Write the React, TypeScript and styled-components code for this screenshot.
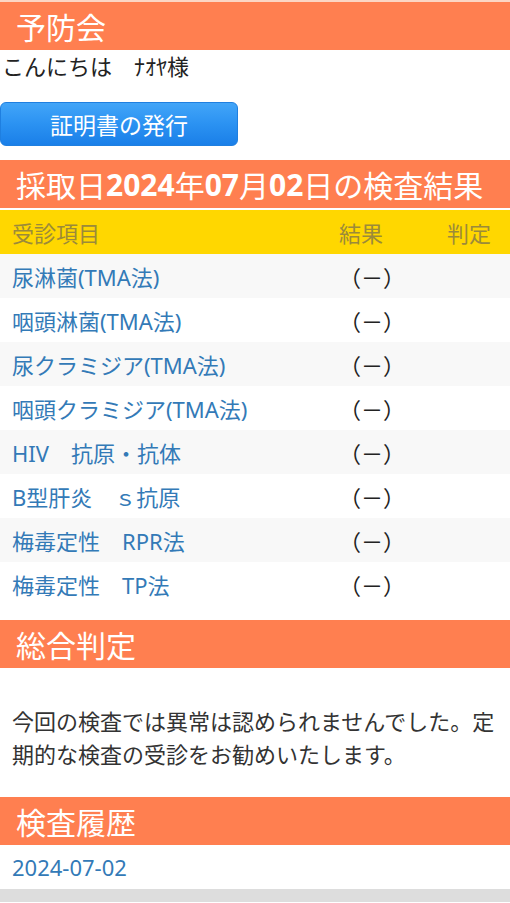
import React from 'react';
import styled, { createGlobalStyle } from 'styled-components';

const GlobalStyle = createGlobalStyle`
  html, body {
    margin: 0;
    padding: 0;
    background: #ffffff;
  }
  body {
    font-family: "Noto Sans", "Noto Sans CJK JP", sans-serif;
    color: #333;
  }
`;

const Page = styled.div`
  width: 510px;
  border-top: 2px solid #fcd6c4;
`;

const SectionHeader = styled.h2`
  margin: 0;
  height: 48px;
  padding: 0 16px;
  display: flex;
  align-items: center;
  background: #ff7f50;
  color: #ffffff;
  font-size: 30px;
  font-weight: 400;
  white-space: nowrap;

  b {
    font-weight: 700;
  }
`;

const Greeting = styled.div`
  height: 32px;
  line-height: 32px;
  padding-left: 2px;
  font-size: 22px;
  color: #222;
`;

const IssueButton = styled.button`
  display: block;
  margin: 20px 0 14px 0;
  width: 238px;
  height: 44px;
  border: 1px solid #1f7fe0;
  border-radius: 6px;
  background: linear-gradient(to bottom, #42a5f8 0%, #2b92f2 50%, #1a7fe8 100%);
  color: #ffffff;
  font-family: "Noto Sans", "Noto Sans CJK JP", sans-serif;
  font-size: 23px;
  padding: 0;
`;

const Table = styled.div`
  margin-top: 2px;
`;

const Row = styled.div<{ striped?: boolean; head?: boolean }>`
  display: grid;
  grid-template-columns: 1fr 108px 63px;
  align-items: center;
  height: 44px;
  padding-left: 12px;
  font-size: 22px;
  background: ${p => (p.head ? '#ffd700' : p.striped ? '#f8f8f8' : '#ffffff')};
  color: ${p => (p.head ? '#9b8a3a' : '#333')};
`;

const ItemName = styled.span`
  color: #337ab7;
  white-space: nowrap;
`;

const Result = styled.span`
  color: #222;
`;

const Spacer = styled.div<{ h: number }>`
  height: ${p => p.h}px;
`;

const Summary = styled.p`
  margin: 0;
  padding: 37px 12px 26px 12px;
  font-size: 22px;
  line-height: 33px;
  color: #333;
`;

const HistoryRow = styled.div`
  height: 44px;
  display: flex;
  align-items: center;
  padding-left: 12px;
  font-size: 22px;
  color: #337ab7;
`;

const Footer = styled.div`
  height: 13px;
  background: #dddddd;
`;

const items = [
  '尿淋菌(TMA法)',
  '咽頭淋菌(TMA法)',
  '尿クラミジア(TMA法)',
  '咽頭クラミジア(TMA法)',
  'HIV　抗原・抗体',
  'B型肝炎　ｓ抗原',
  '梅毒定性　RPR法',
  '梅毒定性　TP法',
];

export default function App() {
  return (
    <>
      <GlobalStyle />
      <Page>
        <SectionHeader>予防会</SectionHeader>
        <Greeting>こんにちは　ﾅｵﾔ様</Greeting>
        <IssueButton>証明書の発行</IssueButton>

        <SectionHeader>
          採取日<b>2024</b>年<b>07</b>月<b>02</b>日の検査結果
        </SectionHeader>
        <Table>
          <Row head>
            <span>受診項目</span>
            <span>結果</span>
            <span>判定</span>
          </Row>
          {items.map((name, i) => (
            <Row key={name} striped={i % 2 === 0}>
              <ItemName>{name}</ItemName>
              <Result>（－）</Result>
              <span />
            </Row>
          ))}
        </Table>
        <Spacer h={14} />

        <SectionHeader>総合判定</SectionHeader>
        <Summary>
          今回の検査では異常は認められませんでした。定期的な検査の受診をお勧めいたします。
        </Summary>

        <SectionHeader>検査履歴</SectionHeader>
        <HistoryRow>2024-07-02</HistoryRow>
        <Footer />
      </Page>
    </>
  );
}
